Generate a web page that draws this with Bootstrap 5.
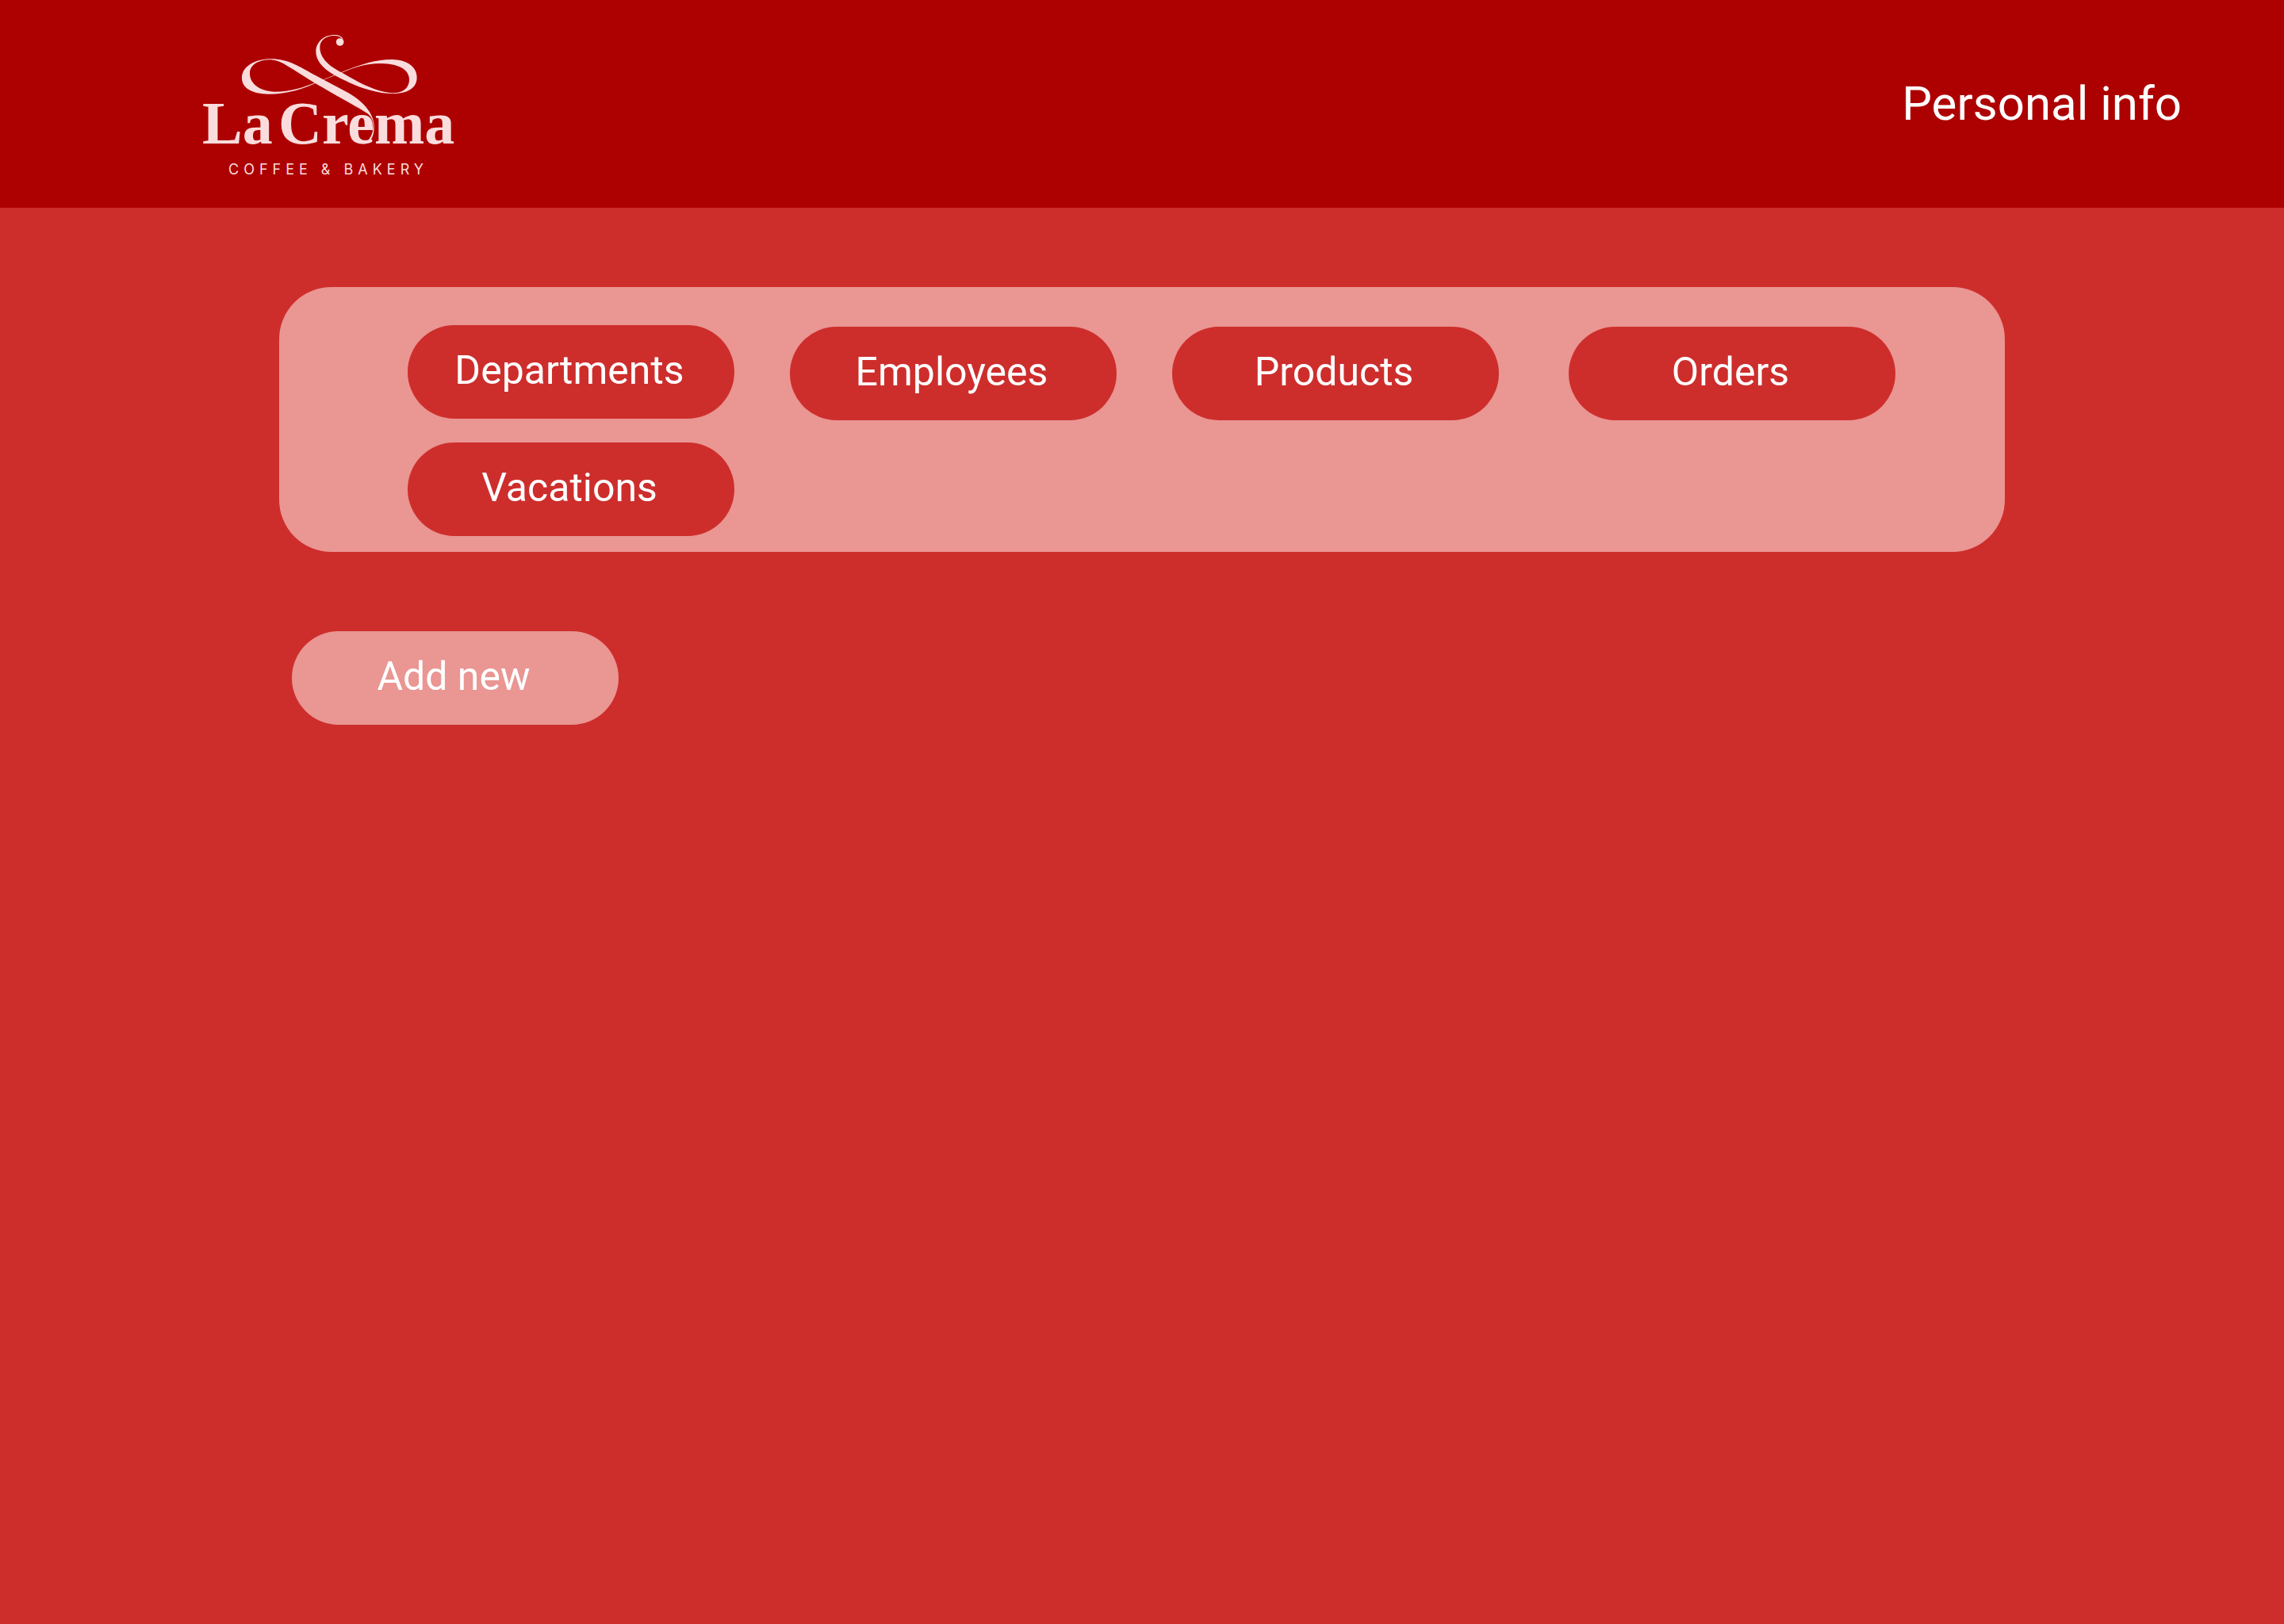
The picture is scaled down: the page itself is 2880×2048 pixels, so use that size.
<!DOCTYPE html>
<html lang="en">
<head>
<meta charset="utf-8">
<meta name="viewport" content="width=device-width, initial-scale=1">
<title>La Crema</title>
<link href="https://cdn.jsdelivr.net/npm/bootstrap@5.3.0/dist/css/bootstrap.min.css" rel="stylesheet">
<style>
  body { background: #cd2e2c; font-family: Roboto, "Liberation Sans", sans-serif; }
  .site-header { background: #ad0000; min-height: 262px; padding: 20px 129px 20px 240px; }
  .brand-art { width: 350px; height: 220px; }
  .brand-name { font: bold 76px "Liberation Serif", serif; }
  .brand-tag { font: 18px Inter, sans-serif; letter-spacing: 6px; }
  .info-link { font-size: 60px; line-height: 70px; }
  .site-main { padding: 100px 352px; }
  .menu-panel { background: #ea9693; border-radius: 66px; padding: 48px 138px 20px 162px; column-gap: 70px; row-gap: 30px; }
  .menu-stack { row-gap: 30px; }
  .menu-rest { column-gap: 70px; row-gap: 30px; padding-top: 2px; }
  .pill { width: 412px; height: 118px; font-size: 50px; line-height: 60px; padding: 0 4px 4px 0; }
  .pill, .pill:hover { color: #fff; background: #cd2e2c; border: 0; }
  .pill-light, .pill-light:hover { background: #ea9693; }
  .actions { padding: 100px 16px 0; }
</style>
<script src="https://cdn.jsdelivr.net/npm/bootstrap@5.3.0/dist/js/bootstrap.bundle.min.js"></script>
</head>
<body>
<header class="site-header d-flex flex-wrap align-items-center justify-content-between">
  <a href="#" class="d-block" aria-label="La Crema home">
    <svg class="brand-art d-block" viewBox="0 0 350 220" fill="#fadcdd">
      <svg width="350" height="220" viewBox="0 0 1050 660">
        <!-- left loop running down into the e -->
        <path d="M480 248C430 272 370 293 295 293C235 292 195 272 195 232C195 188 245 160 305 160C370 160 410 188 480 226L590 284C650 316 692 362 695 410C697 450 685 475 655 483C680 465 692 445 692 410C690 384 680 370 655 357C620 335 570 310 500 268C450 240 400 205 365 185C345 172 325 164 305 163C260 163 225 180 225 215C225 255 265 282 320 284C380 284 430 268 480 246Z"/>
        <!-- right loop -->
        <path d="M478 248L570 211C640 182 700 162 762 162C820 162 857 190 857 230C857 265 830 291 765 291C710 291 650 272 600 249C540 220 475 190 475 130C477 95 505 69 545 69C562 69 574 75 578 86L572 82C566 75 556 72 545 72C510 73 490 90 490 118C491 160 530 190 570 210C620 238 690 283 765 289C805 289 828 270 828 238C828 198 785 178 720 177C660 177 620 193 570 213L478 250Z"/>
        <circle cx="566" cy="96" r="14.5"/>
      </svg>
      <text class="brand-name" x="15" y="160">La</text>
      <text class="brand-name" x="111" y="160">Crema</text>
      <text class="brand-tag" x="48" y="199">COFFEE &amp; BAKERY</text>
    </svg>
  </a>
  <a href="#" class="info-link link-light text-white text-decoration-none">Personal info</a>
</header>

<main class="site-main">
  <nav class="menu-panel d-flex flex-wrap align-items-start" aria-label="Sections">
    <div class="menu-stack d-flex flex-column">
      <button type="button" class="btn rounded-pill pill">Departments</button>
      <button type="button" class="btn rounded-pill pill">Vacations</button>
    </div>
    <div class="menu-rest d-flex flex-wrap flex-fill">
      <button type="button" class="btn rounded-pill pill">Employees</button>
      <button type="button" class="btn rounded-pill pill">Products</button>
      <button type="button" class="btn rounded-pill pill ms-auto">Orders</button>
    </div>
  </nav>
  <div class="actions">
    <button type="button" class="btn rounded-pill pill pill-light">Add new</button>
  </div>
</main>
</body>
</html>
